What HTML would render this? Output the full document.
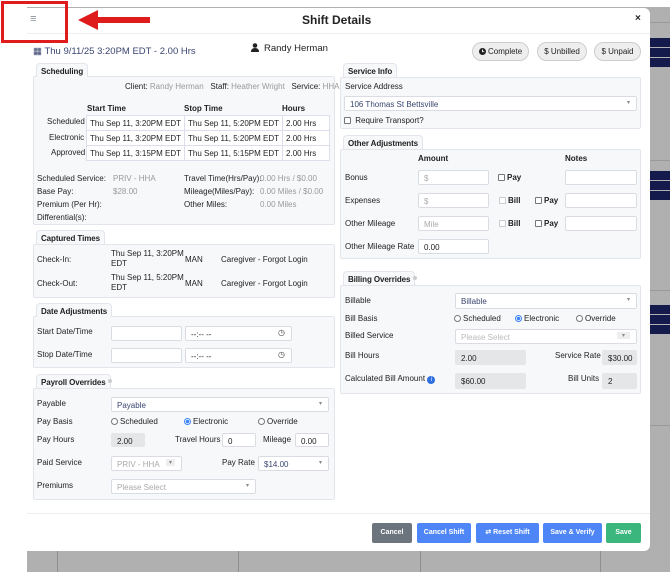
<!DOCTYPE html>
<html><head><meta charset="utf-8"><style>
*{box-sizing:border-box;margin:0;padding:0}
body{width:670px;height:572px;overflow:hidden;background:#fff;font-family:"Liberation Sans",sans-serif;font-size:8px;color:#222;position:relative}
.a{position:absolute;white-space:nowrap}
.bg{position:absolute;left:27px;top:7px;right:0;bottom:0;background:#b0b0b0}
.nv{position:absolute;left:650px;width:20px;height:9px;background:#151a4d}
.gl{position:absolute;left:650px;width:20px;height:1px;background:#999}
.vl{position:absolute;top:551px;width:1px;height:21px;background:#8e8e8e}
.modal{position:absolute;left:27px;top:8px;width:623px;height:543px;background:#fff;border-radius:0 6px 6px 0}
.tab{position:absolute;background:#f7f8fa;border:1px solid #e2e6ec;border-bottom:none;border-radius:4px 4px 0 0;font-weight:bold;font-size:8px;padding:3px 4px 0;height:14px;letter-spacing:-0.1px}
.pn{position:absolute;background:#f7f8fa;border:1px solid #e2e6ec;border-radius:2px}
.in{position:absolute;background:#fff;border:1px solid #d9dde3;border-radius:2px;font-size:8px;padding:3px 5px;color:#222}
.ro{background:#e5e6e8;border-color:#e5e6e8}
.ph{color:#aaa}
.g{color:#999}
.cb{display:inline-block;width:7px;height:7px;border:1px solid #777;border-radius:1px;vertical-align:-1px;margin-right:2px;background:#fff}
.rd{display:inline-block;width:7px;height:7px;border:1px solid #777;border-radius:50%;vertical-align:-1px;margin-right:2px;background:#fff}
.rd.on{border-color:#3b82f6;background:radial-gradient(#3b82f6 45%,#fff 55%)}
.car{position:absolute;right:6px;top:2px;color:#888;font-size:6px}
.btn{position:absolute;top:523px;height:20px;color:#fff;font-size:7px;font-weight:bold;text-align:center;line-height:20px;border-radius:2px;background:#4f86f7}
.pill{position:absolute;top:42px;height:19px;border:1px solid #ccc;background:#eee;border-radius:10px;font-size:8px;text-align:center;line-height:17px}
td{border:1px solid #dde;background:#fff;height:15px;padding:0 3px;font-size:8px}
</style></head><body>
<div class="bg"></div>
<div class="gl" style="top:22px"></div><div class="gl" style="top:160px"></div><div class="gl" style="top:290px"></div><div class="gl" style="top:425px"></div>
<div class="nv" style="top:38px"></div><div class="nv" style="top:48px"></div><div class="nv" style="top:58px"></div>
<div class="nv" style="top:171px"></div><div class="nv" style="top:181px"></div><div class="nv" style="top:191px"></div>
<div class="nv" style="top:305px"></div><div class="nv" style="top:315px"></div><div class="nv" style="top:325px"></div>
<div class="vl" style="left:57px"></div><div class="vl" style="left:238px"></div><div class="vl" style="left:420px"></div><div class="vl" style="left:600px"></div>
<div class="modal"></div>
<div class="a" style="left:27px;top:33px;width:623px;height:1px;background:#eceef0"></div>
<div class="a" style="left:27px;top:513px;width:623px;height:1px;background:#eceef0"></div>
<div class="a" style="left:0;top:0;width:27px;height:7px;background:#fff"></div>
<div class="a" style="left:302px;top:13px;font-size:12px;font-weight:bold">Shift Details</div>
<div class="a" style="left:635px;top:13px;font-size:10px;font-weight:bold">×</div>
<div class="a" style="left:33px;top:46px;font-size:9.5px;color:#3a4670">▦ Thu 9/11/25 3:20PM EDT - 2.00 Hrs</div>
<svg class="a" style="left:251px;top:43px" width="8" height="9"><circle cx="4" cy="2.5" r="2.3" fill="#222"/><path d="M0 9 Q0 5 4 5 Q8 5 8 9Z" fill="#222"/></svg>
<div class="a" style="left:264px;top:43px;font-size:9.5px">Randy Herman</div>
<div class="pill" style="left:472px;width:57px"><svg width="7" height="7" style="vertical-align:-1px"><circle cx="3.5" cy="3.5" r="3.5" fill="#222"/><path d="M3.5 1.5V3.7H5.2" stroke="#fff" fill="none" stroke-width="0.9"/></svg> Complete</div>
<div class="pill" style="left:537px;width:50px">$ Unbilled</div>
<div class="pill" style="left:594px;width:47px">$ Unpaid</div>

<div class="pn" style="left:33px;top:76px;width:302px;height:149px"></div>
<div class="tab" style="left:36px;top:63px">Scheduling</div>
<div class="a" style="left:125px;top:82px">Client: <span class="g">Randy Herman</span> &nbsp; Staff: <span class="g">Heather Wright</span> &nbsp; Service: <span class="g">HHA</span></div>
<div class="a" style="left:87px;top:104px;font-weight:bold">Start Time</div>
<div class="a" style="left:184px;top:104px;font-weight:bold">Stop Time</div>
<div class="a" style="left:282px;top:104px;font-weight:bold">Hours</div>
<div class="a" style="left:47px;top:117px">Scheduled</div>
<div class="a" style="left:49px;top:133px">Electronic</div>
<div class="a" style="left:51px;top:148px">Approved</div>
<table class="a" style="left:86px;top:115px;width:244px;border-collapse:collapse">
<tr><td style="width:97px">Thu Sep 11, 3:20PM EDT</td><td style="width:98px">Thu Sep 11, 5:20PM EDT</td><td>2.00 Hrs</td></tr>
<tr><td>Thu Sep 11, 3:20PM EDT</td><td>Thu Sep 11, 5:20PM EDT</td><td>2.00 Hrs</td></tr>
<tr><td>Thu Sep 11, 3:15PM EDT</td><td>Thu Sep 11, 5:15PM EDT</td><td>2.00 Hrs</td></tr></table>
<div class="a" style="left:37px;top:172px;line-height:13px">Scheduled Service:<br>Base Pay:<br>Premium (Per Hr):<br>Differential(s):</div>
<div class="a g" style="left:113px;top:172px;line-height:13px">PRIV - HHA<br>$28.00</div>
<div class="a" style="left:184px;top:172px;line-height:13px">Travel Time(Hrs/Pay):<br>Mileage(Miles/Pay):<br>Other Miles:</div>
<div class="a g" style="left:260px;top:172px;line-height:13px">0.00 Hrs / $0.00<br>0.00 Miles / $0.00<br>0.00 Miles</div>

<div class="pn" style="left:33px;top:244px;width:302px;height:54px"></div>
<div class="tab" style="left:36px;top:230px">Captured Times</div>
<div class="a" style="left:37px;top:255px">Check-In:</div>
<div class="a" style="left:37px;top:279px">Check-Out:</div>
<div class="a" style="left:111px;top:249px;line-height:10px">Thu Sep 11, 3:20PM<br>EDT</div>
<div class="a" style="left:111px;top:273px;line-height:10px">Thu Sep 11, 5:20PM<br>EDT</div>
<div class="a" style="left:185px;top:255px">MAN</div><div class="a" style="left:185px;top:279px">MAN</div>
<div class="a" style="left:221px;top:255px">Caregiver - Forgot Login</div>
<div class="a" style="left:221px;top:279px">Caregiver - Forgot Login</div>

<div class="pn" style="left:33px;top:316px;width:302px;height:52px"></div>
<div class="tab" style="left:36px;top:303px">Date Adjustments</div>
<div class="a" style="left:37px;top:327px">Start Date/Time</div>
<div class="a" style="left:37px;top:350px">Stop Date/Time</div>
<div class="in" style="left:111px;top:326px;width:71px;height:15px"></div>
<div class="in" style="left:185px;top:326px;width:107px;height:15px">--:-- --<span class="car" style="font-size:8px;top:1px;color:#444">◷</span></div>
<div class="in" style="left:111px;top:348px;width:71px;height:15px"></div>
<div class="in" style="left:185px;top:348px;width:107px;height:15px">--:-- --<span class="car" style="font-size:8px;top:1px;color:#444">◷</span></div>

<div class="pn" style="left:33px;top:388px;width:302px;height:112px"></div>
<div class="tab" style="left:36px;top:374px">Payroll Overrides</div>
<div class="a" style="left:108px;top:379px;width:4px;height:4px;border-radius:50%;background:#ccc"></div>
<div class="a" style="left:37px;top:399px">Payable</div>
<div class="in" style="left:111px;top:397px;width:218px;height:15px;color:#3a4670">Payable<span class="car">▾</span></div>
<div class="a" style="left:37px;top:417px">Pay Basis</div>
<div class="a" style="left:111px;top:417px"><span class="rd"></span>Scheduled</div>
<div class="a" style="left:184px;top:417px"><span class="rd on"></span>Electronic</div>
<div class="a" style="left:258px;top:417px"><span class="rd"></span>Override</div>
<div class="a" style="left:37px;top:435px">Pay Hours</div>
<div class="in ro" style="left:111px;top:433px;width:34px;height:14px">2.00</div>
<div class="a" style="left:175px;top:435px">Travel Hours</div>
<div class="in" style="left:222px;top:433px;width:34px;height:14px">0</div>
<div class="a" style="left:263px;top:435px">Mileage</div>
<div class="in" style="left:295px;top:433px;width:34px;height:14px">0.00</div>
<div class="a" style="left:37px;top:458px">Paid Service</div>
<div class="in ph" style="left:111px;top:456px;width:71px;height:15px">PRIV - HHA<span class="car" style="background:#eee;padding:0 3px">▾</span></div>
<div class="a" style="left:222px;top:458px">Pay Rate</div>
<div class="in" style="left:258px;top:456px;width:71px;height:15px;color:#3a4670">$14.00<span class="car">▾</span></div>
<div class="a" style="left:37px;top:481px">Premiums</div>
<div class="in ph" style="left:111px;top:479px;width:145px;height:15px">Please Select<span class="car">▾</span></div>

<div class="pn" style="left:340px;top:77px;width:301px;height:52px"></div>
<div class="tab" style="left:343px;top:63px">Service Info</div>
<div class="a" style="left:345px;top:82px">Service Address</div>
<div class="in" style="left:344px;top:96px;width:293px;height:15px;color:#3a4670">106 Thomas St Bettsville<span class="car">▾</span></div>
<div class="a" style="left:344px;top:116px"><span class="cb"></span> Require Transport?</div>

<div class="pn" style="left:340px;top:149px;width:301px;height:110px"></div>
<div class="tab" style="left:343px;top:135px">Other Adjustments</div>
<div class="a" style="left:418px;top:154px;font-weight:bold">Amount</div>
<div class="a" style="left:565px;top:154px;font-weight:bold">Notes</div>
<div class="a" style="left:345px;top:173px">Bonus</div>
<div class="a" style="left:345px;top:196px">Expenses</div>
<div class="a" style="left:345px;top:219px">Other Mileage</div>
<div class="a" style="left:345px;top:242px">Other Mileage Rate</div>
<div class="in ph" style="left:418px;top:170px;width:71px;height:15px">$</div>
<div class="in ph" style="left:418px;top:193px;width:71px;height:15px">$</div>
<div class="in ph" style="left:418px;top:216px;width:71px;height:15px">Mile</div>
<div class="in" style="left:418px;top:239px;width:71px;height:15px">0.00</div>
<div class="a" style="left:498px;top:173px;font-weight:bold"><span class="cb"></span>Pay</div>
<div class="a" style="left:499px;top:196px;font-weight:bold"><span class="cb" style="border-color:#ccc"></span>Bill</div>
<div class="a" style="left:535px;top:196px;font-weight:bold"><span class="cb"></span>Pay</div>
<div class="a" style="left:499px;top:219px;font-weight:bold"><span class="cb" style="border-color:#ccc"></span>Bill</div>
<div class="a" style="left:535px;top:219px;font-weight:bold"><span class="cb"></span>Pay</div>
<div class="in" style="left:565px;top:170px;width:72px;height:15px"></div>
<div class="in" style="left:565px;top:193px;width:72px;height:15px"></div>
<div class="in" style="left:565px;top:216px;width:72px;height:15px"></div>

<div class="pn" style="left:340px;top:285px;width:301px;height:109px"></div>
<div class="tab" style="left:343px;top:271px">Billing Overrides</div>
<div class="a" style="left:413px;top:276px;width:4px;height:4px;border-radius:50%;background:#ccc"></div>
<div class="a" style="left:345px;top:296px">Billable</div>
<div class="in" style="left:455px;top:293px;width:182px;height:16px;color:#3a4670">Billable<span class="car">▾</span></div>
<div class="a" style="left:345px;top:314px">Bill Basis</div>
<div class="a" style="left:454px;top:314px"><span class="rd"></span>Scheduled</div>
<div class="a" style="left:515px;top:314px"><span class="rd on"></span>Electronic</div>
<div class="a" style="left:576px;top:314px"><span class="rd"></span>Override</div>
<div class="a" style="left:345px;top:331px">Billed Service</div>
<div class="in ph" style="left:455px;top:329px;width:182px;height:15px;color:#bbb">Please Select<span class="car" style="background:#eee;padding:0 5px">▾</span></div>
<div class="a" style="left:345px;top:351px">Bill Hours</div>
<div class="in ro" style="left:455px;top:350px;width:71px;height:15px">2.00</div>
<div class="a" style="left:555px;top:351px">Service Rate</div>
<div class="in ro" style="left:602px;top:350px;width:35px;height:15px">$30.00</div>
<div class="a" style="left:345px;top:374px">Calculated Bill Amount <span style="display:inline-block;width:8px;height:8px;border-radius:50%;background:#2f6fe0;color:#fff;font-size:6px;text-align:center;line-height:8px;vertical-align:0">i</span></div>
<div class="in ro" style="left:455px;top:373px;width:71px;height:16px">$60.00</div>
<div class="a" style="left:568px;top:374px">Bill Units</div>
<div class="in ro" style="left:602px;top:373px;width:35px;height:16px">2</div>

<div class="btn" style="left:372px;width:40px;background:#6c757d">Cancel</div>
<div class="btn" style="left:417px;width:54px">Cancel Shift</div>
<div class="btn" style="left:476px;width:63px">⇄ Reset Shift</div>
<div class="btn" style="left:543px;width:59px">Save &amp; Verify</div>
<div class="btn" style="left:606px;width:35px;background:#3bb77e">Save</div>

<div class="a" style="left:30px;top:13px;font-size:11px;color:#8a8f99">≡</div>
<div class="a" style="left:1px;top:1px;width:67px;height:42px;border:3px solid #e01b1b"></div>
<svg class="a" style="left:78px;top:10px" width="74" height="20"><polygon points="0,10 20,0 20,7 72,7 72,13 20,13 20,20" fill="#e01b1b"/></svg>
</body></html>
